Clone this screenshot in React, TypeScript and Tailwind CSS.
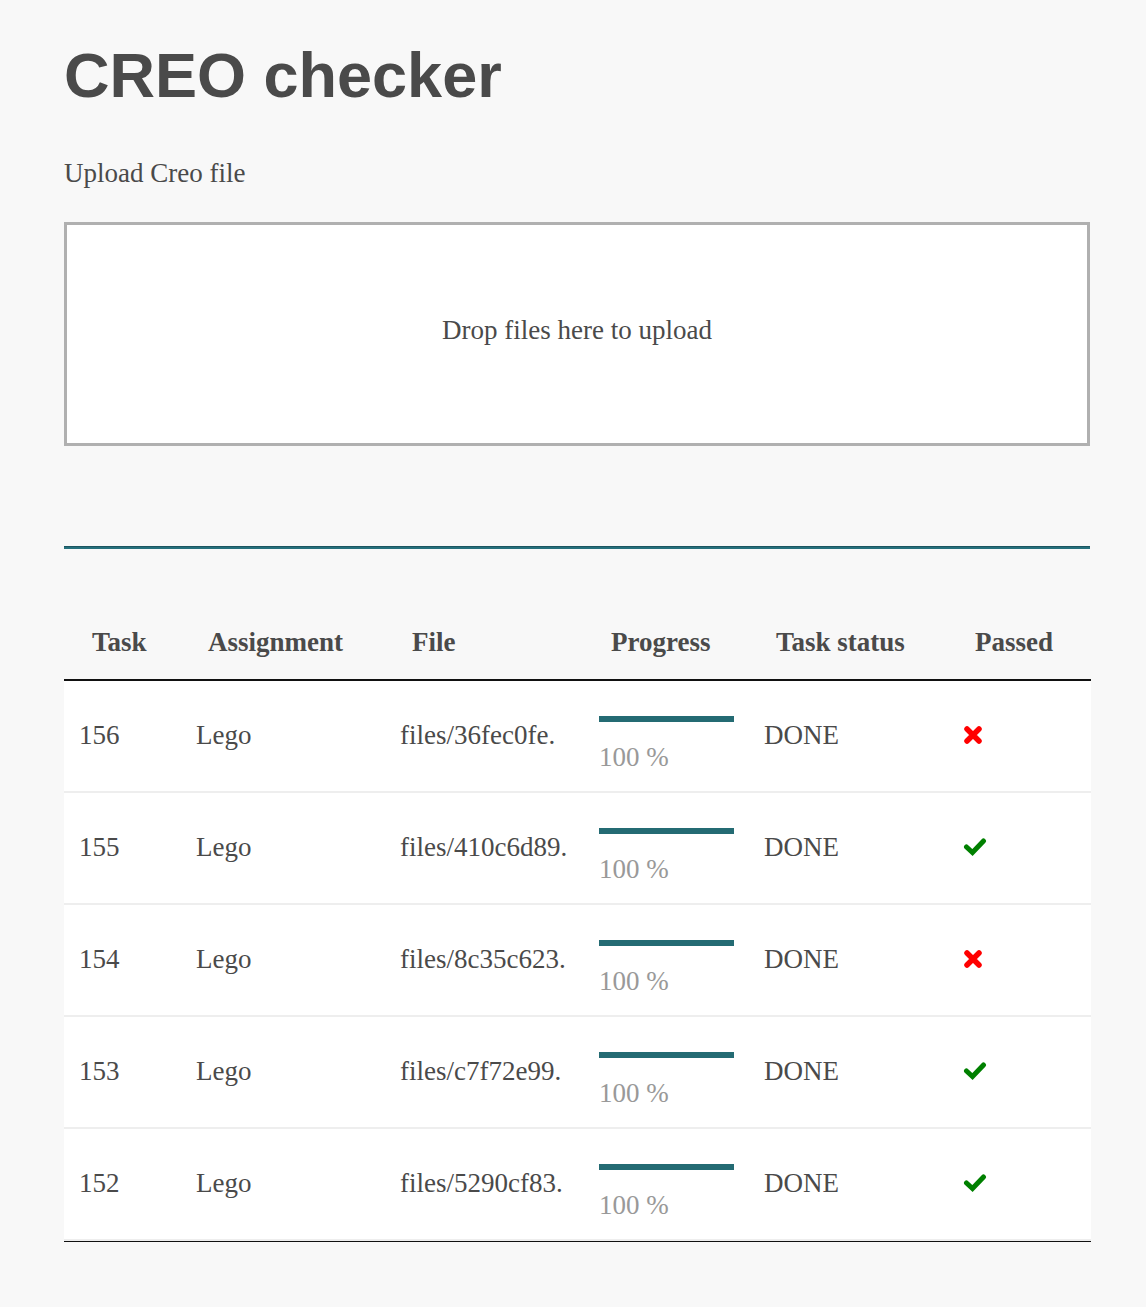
import React from "react";

type Row = {
    id: number;
    assignment: string;
    file: string;
    progress: number;
    status: string;
    passed: boolean;
};

const rows: Row[] = [
    { id: 156, assignment: "Lego", file: "files/36fec0fe.", progress: 100, status: "DONE", passed: false },
    { id: 155, assignment: "Lego", file: "files/410c6d89.", progress: 100, status: "DONE", passed: true },
    { id: 154, assignment: "Lego", file: "files/8c35c623.", progress: 100, status: "DONE", passed: false },
    { id: 153, assignment: "Lego", file: "files/c7f72e99.", progress: 100, status: "DONE", passed: true },
    { id: 152, assignment: "Lego", file: "files/5290cf83.", progress: 100, status: "DONE", passed: true },
];

function CrossIcon() {
    return (
        <svg width="20" height="20" viewBox="0 0 20 20" className="block">
            <path d="M4 4 L16 16 M16 4 L4 16" stroke="#ff0000" strokeWidth="5.5" strokeLinecap="round" fill="none" />
        </svg>
    );
}

function CheckIcon() {
    return (
        <svg width="24" height="19" viewBox="0 0 24 19" className="block">
            <polyline points="3.5,10 9.5,15.5 20.5,4" stroke="#008000" strokeWidth="5" strokeLinecap="round" strokeLinejoin="miter" fill="none" />
        </svg>
    );
}

const headers = ["Task", "Assignment", "File", "Progress", "Task status", "Passed"];

export default function App() {
    return (
        <div className="min-h-[1307px] w-full bg-[#f8f8f8] text-[#4a4a4a] font-['Liberation_Serif',serif]">
            <div className="ml-[64px] w-[1027px] pt-[44px] pb-[60px]">
                <h1 className="font-['Liberation_Sans',Arial,sans-serif] text-[63px] leading-none font-bold text-[#4a4a4a]">
                    CREO checker
                </h1>

                <p className="mt-[46px] text-[27px] leading-[40px]">Upload Creo file</p>

                <div className="mt-[29px] w-[1026px] h-[224px] border-[3px] border-[#b0b0b0] bg-white flex items-center justify-center pb-[8px]">
                    <span className="text-[27px] leading-[40px]">Drop files here to upload</span>
                </div>

                <div className="mt-[100px] h-[3px] w-[1026px] bg-[#25707c] border-t border-[#1b5560]" />

                <div className="mt-[57px] border-b border-[#111111]">
                    <table className="w-[1027px] table-fixed border-collapse text-[27px] leading-[40px]">
                        <colgroup>
                            <col className="w-[116px]" />
                            <col className="w-[204px]" />
                            <col className="w-[199px]" />
                            <col className="w-[165px]" />
                            <col className="w-[199px]" />
                            <col className="w-[144px]" />
                        </colgroup>
                        <thead>
                            <tr className="border-b-2 border-[#111111]">
                                {headers.map((h) => (
                                    <th key={h} className="pl-[28px] pt-[16px] pb-[17px] text-left font-bold whitespace-nowrap">
                                        {h}
                                    </th>
                                ))}
                            </tr>
                        </thead>
                        <tbody>
                            {rows.map((r) => (
                                <tr key={r.id} className="bg-white border-b-2 border-[#eeeeee] h-[112px] align-top">
                                    <td className="pl-[15px] pt-[34px]">{r.id}</td>
                                    <td className="pl-[16px] pt-[34px]">{r.assignment}</td>
                                    <td className="pl-[16px] pt-[34px] whitespace-nowrap">{r.file}</td>
                                    <td className="pl-[16px] pt-[35px]">
                                        <div className="h-[6px] w-[135px] bg-[#e5e5e5]">
                                            <div className="h-full bg-[#246b73]" style={{ width: `${r.progress}%` }} />
                                        </div>
                                        <div className="mt-[15px] text-[#999999]">{r.progress} %</div>
                                    </td>
                                    <td className="pl-[16px] pt-[34px]">{r.status}</td>
                                    <td className="pl-[16px] pt-[44px]">
                                        {r.passed ? <CheckIcon /> : <CrossIcon />}
                                    </td>
                                </tr>
                            ))}
                        </tbody>
                    </table>
                </div>
            </div>
        </div>
    );
}
